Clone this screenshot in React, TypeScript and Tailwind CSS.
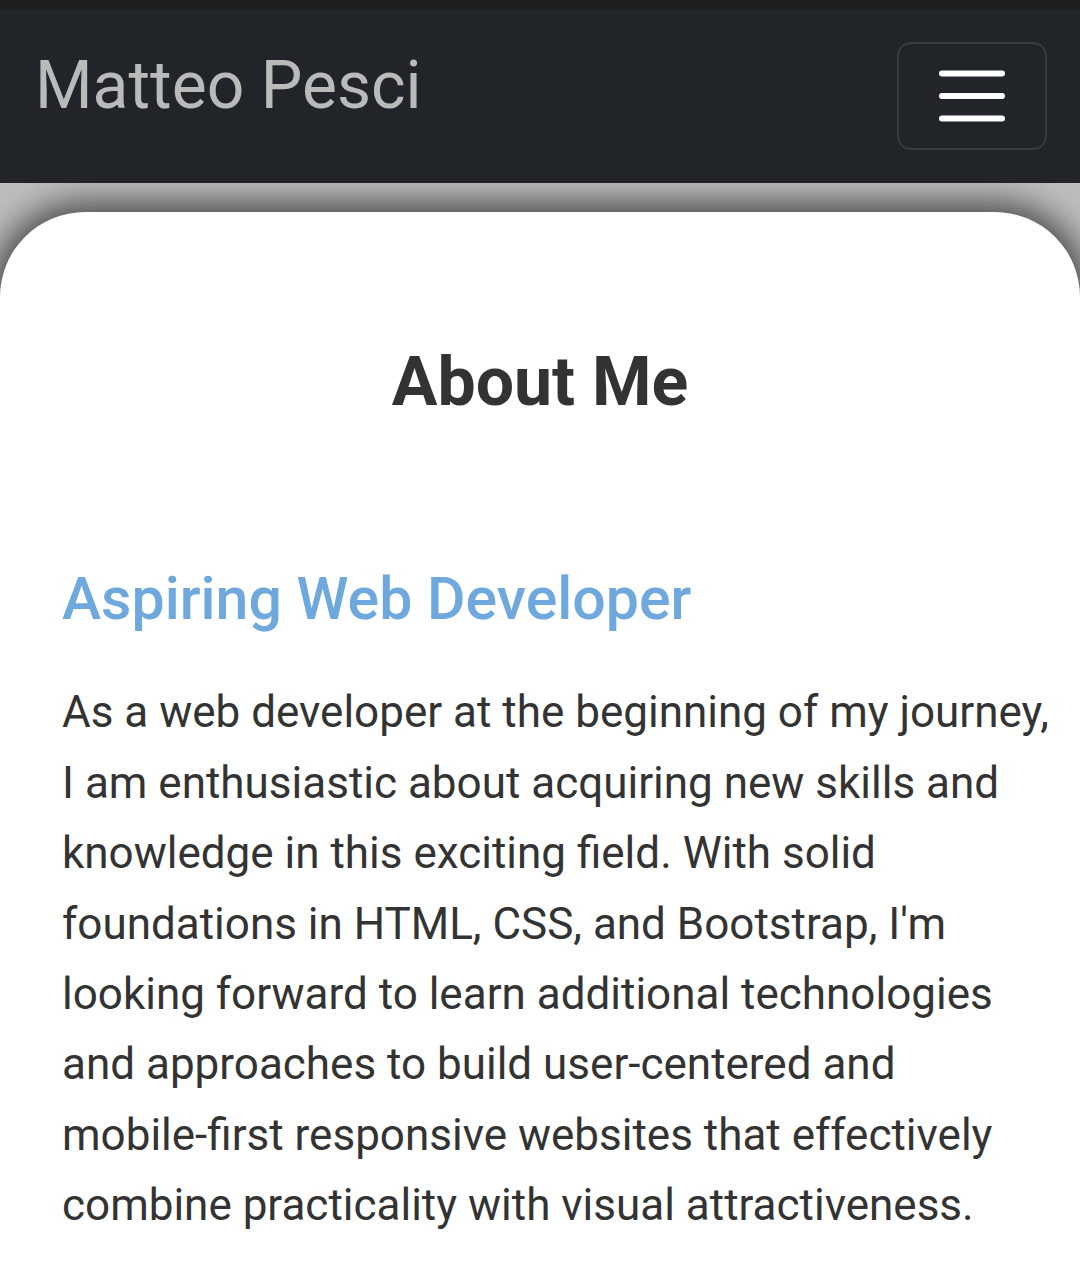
import React from "react";

const lines = [
  "As a web developer at the beginning of my journey,",
  "I am enthusiastic about acquiring new skills and",
  "knowledge in this exciting field. With solid",
  "foundations in HTML, CSS, and Bootstrap, I'm",
  "looking forward to learn additional technologies",
  "and approaches to build user-centered and",
  "mobile-first responsive websites that effectively",
  "combine practicality with visual attractiveness.",
];

function Toggler() {
  return (
    <button className="flex h-[108px] w-[150px] items-center justify-center rounded-[14px] border-2 border-white/10">
      <svg width="66" height="52" viewBox="0 0 66 52" fill="none">
        <path d="M3 3.5h60M3 26h60M3 48.5h60" stroke="#ffffff" strokeWidth="6" strokeLinecap="round" />
      </svg>
    </button>
  );
}

export default function App() {
  return (
    <div className="min-h-[1261px] bg-[#bdbdbd] font-['Roboto',sans-serif] overflow-hidden">
      <div className="h-[10px] bg-[#1f1f1f] relative z-10" />
      <nav className="relative z-10 flex items-start justify-between bg-[#212529] pl-[35px] pr-[33px] pt-[32px] pb-[33px]">
        <a className="mt-[4px] text-[66px] leading-[1.2] text-[#bababa]">Matteo Pesci</a>
        <Toggler />
      </nav>

      <div className="pt-[29px]">
        <section className="min-h-[1100px] rounded-t-[85px] bg-white pt-[130px] pl-[62px] pr-4 shadow-[0_0_32px_10px_rgba(0,0,0,0.6)]">
          <h2 className="text-center text-[68px] font-bold leading-[1.2] text-[#333333] pr-[46px]">About Me</h2>
          <h3 className="mt-[140px] text-[59px] font-medium leading-[1.2] text-[#6fa8dc]">Aspiring Web Developer</h3>
          <p className="mt-[43px] text-[44px] leading-[1.6] text-[#333333] whitespace-nowrap">
            {lines.map((l, i) => (
              <React.Fragment key={i}>
                {l}
                {i < lines.length - 1 && <br />}
              </React.Fragment>
            ))}
          </p>
        </section>
      </div>
    </div>
  );
}
